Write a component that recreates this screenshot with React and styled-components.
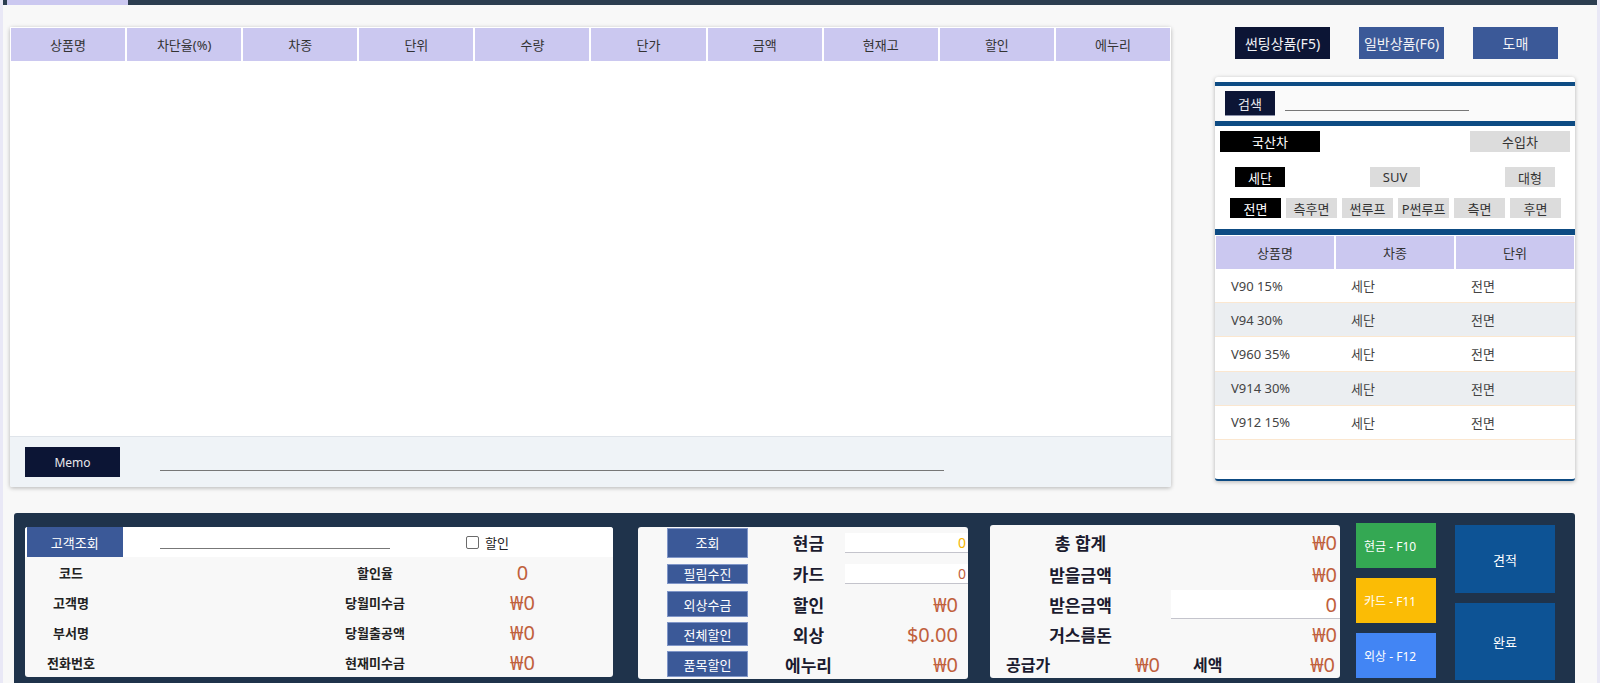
import styled, { createGlobalStyle } from "styled-components";

const GlobalStyle = createGlobalStyle`
  html, body {
    margin: 0;
    padding: 0;
    background: #e9e8f6;
  }
  body {
    font-family: "Noto Sans", "Noto Sans CJK KR", sans-serif;
    color: #333;
  }
  * { box-sizing: border-box; }
`;

const Page = styled.div`
  margin: 0 3px;
  min-height: 683px;
  background: #f8f8f8;
  overflow: hidden;
`;

const TopBar = styled.div`
  display: flex;
  height: 5px;
  padding-left: 4px;
  background: #2c3e50;
`;

const TopTab = styled.div`
  width: 121px;
  height: 5px;
  background: #cbc8f0;
`;

const Main = styled.div`
  display: flex;
  align-items: flex-start;
  gap: 44px;
  padding: 22px 0 0 7px;
`;

// ---------- left order table ----------
const OrderCard = styled.div`
  display: flex;
  flex-direction: column;
  width: 1161px;
  height: 460px;
  background: #fff;
  border-radius: 2px;
  box-shadow: 0 1px 4px rgba(0, 0, 0, 0.28);
`;

const HeadRow = styled.div`
  display: grid;
  grid-template-columns: repeat(${(p) => p.$cols}, 1fr);
  column-gap: 2px;
  padding: 1px 1px 0;
  background: #fff;
`;

const HeadCell = styled.div`
  display: flex;
  align-items: center;
  justify-content: center;
  height: 33px;
  background: #cbc8f0;
  font-size: 13px;
  color: #333;
`;

const OrderBody = styled.div`
  flex: 1;
  background: #fff;
`;

const MemoBar = styled.div`
  display: flex;
  align-items: flex-start;
  height: 51px;
  padding: 10px 0 0 15px;
  background: #eff3f7;
  border-top: 1px solid #dfe4ea;
  border-radius: 0 0 2px 2px;
`;

const DarkButton = styled.div`
  display: flex;
  align-items: center;
  justify-content: center;
  width: ${(p) => p.$w}px;
  height: ${(p) => p.$h}px;
  background: #0c1535;
  color: #e8e8ee;
  font-size: ${(p) => p.$fs || 13}px;
  border-bottom: ${(p) => (p.$edge ? "1px solid #8a90a8" : "none")};
`;

const Underline = styled.div`
  width: ${(p) => p.$w}px;
  height: 1px;
  margin-left: ${(p) => p.$ml}px;
  margin-top: ${(p) => p.$mt}px;
  background: #777;
`;

// ---------- right product panel ----------
const SideColumn = styled.div`
  width: 360px;
`;

const ModeRow = styled.div`
  display: flex;
  gap: 29px;
  padding-left: 20px;
`;

const ModeButton = styled.div`
  display: flex;
  align-items: center;
  justify-content: center;
  width: ${(p) => p.$w}px;
  height: 32px;
  background: ${(p) => (p.$active ? "#0c1535" : "#3b5998")};
  color: #f2f2f6;
  font-size: 14px;
`;

const ProductCard = styled.div`
  margin-top: 18px;
  padding-top: 5px;
  background: #fff;
  border-radius: 3px;
  border-bottom: 2px solid #0d4b83;
  box-shadow: 0 1px 4px rgba(0, 0, 0, 0.28);
  overflow: hidden;
`;

const Band = styled.div`
  height: ${(p) => p.$h}px;
  background: #0d4b83;
`;

const SearchRow = styled.div`
  display: flex;
  align-items: flex-start;
  height: 35px;
  padding: 5px 0 0 10px;
  background: #fafafa;
`;

const Filters = styled.div`
  display: flex;
  flex-direction: column;
  padding: 5px 0 11px;
`;

const ChipRow = styled.div`
  display: flex;
  justify-content: ${(p) => p.$justify || "space-between"};
  gap: ${(p) => p.$gap || 0}px;
  margin-top: ${(p) => p.$mt || 0}px;
  padding: 0 ${(p) => p.$pr}px 0 ${(p) => p.$pl}px;
`;

const Chip = styled.div`
  display: flex;
  align-items: center;
  justify-content: center;
  width: ${(p) => p.$w}px;
  height: ${(p) => p.$h}px;
  background: ${(p) => (p.$active ? "#000" : "#dcdcdc")};
  color: ${(p) => (p.$active ? "#fff" : "#333")};
  font-size: 13px;
`;

const ProductRow = styled.div`
  display: grid;
  grid-template-columns: repeat(3, 1fr);
  column-gap: 2px;
  height: 34.2px;
  padding: 0 1px;
  align-items: center;
  background: ${(p) => (p.$alt ? "#ebeef1" : "#fff")};
  border-bottom: 1px solid #fbe7d0;
  font-size: 13px;
  color: #444;
`;

const ProductCell = styled.div`
  padding-left: 15px;
`;

const ListFooter = styled.div`
  height: 30px;
  background: #f8f8f8;
  margin-bottom: 9px;
`;

// ---------- bottom checkout panel ----------
const Checkout = styled.div`
  display: flex;
  align-items: flex-start;
  width: 1561px;
  height: 175px;
  margin: 26px 0 0 11px;
  padding: 10px 0 0 10.5px;
  background: #1f334b;
  border-radius: 3px 3px 0 0;
`;

const Card = styled.div`
  width: ${(p) => p.$w}px;
  height: ${(p) => p.$h}px;
  margin-left: ${(p) => p.$ml || 0}px;
  margin-top: ${(p) => p.$mt || 0}px;
  background: #f8f8f8;
  border-radius: 3px;
  overflow: hidden;
`;

const CustomerTop = styled.div`
  display: flex;
  align-items: stretch;
  height: 30px;
  padding-left: 2.5px;
  background: #fff;
`;

const BlueButton = styled.div`
  display: flex;
  align-items: center;
  justify-content: center;
  width: ${(p) => p.$w}px;
  height: ${(p) => p.$h}px;
  margin-left: ${(p) => p.$ml || 0}px;
  background: #3b5998;
  border: ${(p) => (p.$outlined ? "1px solid #8096c8" : "none")};
  color: #fff;
  font-size: 13px;
`;

const CheckLabel = styled.label`
  display: flex;
  align-items: center;
  gap: 6px;
  margin-left: 76px;
  font-size: 13px;
  color: #222;
`;

const CheckBox = styled.span`
  width: 13px;
  height: 13px;
  border: 1.5px solid #6b6b6b;
  border-radius: 2px;
  background: #fff;
`;

const InfoGrid = styled.div`
  display: grid;
  grid-template-columns: 93px 200px 115px 1fr;
  grid-auto-rows: 30px;
  align-items: center;
`;

const InfoLabel = styled.div`
  grid-column: ${(p) => p.$col};
  text-align: center;
  font-size: 13px;
  font-weight: 600;
  color: #222;
`;

const Amount = styled.div`
  text-align: ${(p) => p.$align || "center"};
  padding-right: ${(p) => p.$pr || 0}px;
  font-size: ${(p) => p.$fs || 20}px;
  color: #c0603d;
`;

const PayGrid = styled.div`
  display: grid;
  grid-template-columns: 110px 97px 1fr;
  grid-template-rows: 31px 31px 30px 30px 30px;
  align-items: center;
`;

const PayLabel = styled.div`
  padding-left: 24px;
  text-align: center;
  font-size: 17px;
  font-weight: 700;
  color: #1b1b2f;
`;

const FieldBox = styled.div`
  height: ${(p) => p.$h}px;
  padding-right: ${(p) => p.$pr || 2}px;
  background: #fff;
  border-bottom: 1px solid #c4c4cc;
  text-align: right;
  line-height: ${(p) => p.$h}px;
  font-size: ${(p) => p.$fs}px;
  color: ${(p) => p.$color};
`;

const TotalGrid = styled.div`
  display: grid;
  grid-template-columns: 181px 1fr;
  grid-template-rows: 34px 30px 30px 30px 30px;
  align-items: center;
`;

const TotalLabel = styled.div`
  text-align: center;
  font-size: 17px;
  font-weight: 700;
  color: #1b1b2f;
`;

const SplitRow = styled.div`
  grid-column: 1 / span 2;
  display: grid;
  grid-template-columns: 172px 1fr;
  align-items: center;
`;

const SplitHalf = styled.div`
  display: flex;
  align-items: center;
  justify-content: space-between;
  padding: 0 ${(p) => p.$pr}px 0 ${(p) => p.$pl}px;
`;

const SmallLabel = styled.span`
  font-size: 16px;
  font-weight: 700;
  color: #1b1b2f;
`;

const KeyColumn = styled.div`
  display: flex;
  flex-direction: column;
  gap: 10px;
  width: ${(p) => p.$w}px;
  margin-left: ${(p) => p.$ml}px;
  margin-top: ${(p) => p.$mt || 0}px;
`;

const PayKey = styled.div`
  display: flex;
  align-items: center;
  height: 45px;
  padding-left: 8px;
  background: ${(p) => p.$bg};
  color: #fff;
  font-size: 12px;
`;

const BigKey = styled.div`
  display: flex;
  align-items: center;
  justify-content: center;
  height: ${(p) => p.$h}px;
  background: #0d5395;
  color: #fff;
  font-size: 13px;
`;

const orderColumns = ["상품명", "차단율(%)", "차종", "단위", "수량", "단가", "금액", "현재고", "할인", "에누리"];

const products = [
  { name: "V90 15%", type: "세단", unit: "전면" },
  { name: "V94 30%", type: "세단", unit: "전면" },
  { name: "V960 35%", type: "세단", unit: "전면" },
  { name: "V914 30%", type: "세단", unit: "전면" },
  { name: "V912 15%", type: "세단", unit: "전면" },
];

const parts = ["전면", "측후면", "썬루프", "P썬루프", "측면", "후면"];

export default function App() {
  return (
    <>
      <GlobalStyle />
      <Page>
        <TopBar>
          <TopTab />
        </TopBar>

        <Main>
          <OrderCard>
            <HeadRow $cols={10}>
              {orderColumns.map((c) => (
                <HeadCell key={c}>{c}</HeadCell>
              ))}
            </HeadRow>
            <OrderBody />
            <MemoBar>
              <DarkButton $w={95} $h={30} $fs={12}>Memo</DarkButton>
              <Underline $w={784} $ml={40} $mt={23} />
            </MemoBar>
          </OrderCard>

          <SideColumn>
            <ModeRow>
              <ModeButton $w={95} $active>썬팅상품(F5)</ModeButton>
              <ModeButton $w={85}>일반상품(F6)</ModeButton>
              <ModeButton $w={85}>도매</ModeButton>
            </ModeRow>

            <ProductCard>
              <Band $h={4} />
              <SearchRow>
                <DarkButton $w={50} $h={25} $fs={13} $edge>검색</DarkButton>
                <Underline $w={184} $ml={10} $mt={19} />
              </SearchRow>
              <Band $h={5} />
              <Filters>
                <ChipRow $pl={5} $pr={5}>
                  <Chip $w={100} $h={21} $active>국산차</Chip>
                  <Chip $w={100} $h={21}>수입차</Chip>
                </ChipRow>
                <ChipRow $pl={20} $pr={20} $mt={15}>
                  <Chip $w={50} $h={20} $active>세단</Chip>
                  <Chip $w={50} $h={20}>SUV</Chip>
                  <Chip $w={50} $h={20}>대형</Chip>
                </ChipRow>
                <ChipRow $pl={15} $pr={14} $mt={11} $justify="flex-start" $gap={5}>
                  {parts.map((p, i) => (
                    <Chip key={p} $w={51} $h={20} $active={i === 0}>{p}</Chip>
                  ))}
                </ChipRow>
              </Filters>
              <Band $h={6} />
              <HeadRow $cols={3}>
                <HeadCell>상품명</HeadCell>
                <HeadCell>차종</HeadCell>
                <HeadCell>단위</HeadCell>
              </HeadRow>
              {products.map((p, i) => (
                <ProductRow key={p.name} $alt={i % 2 === 1}>
                  <ProductCell>{p.name}</ProductCell>
                  <ProductCell>{p.type}</ProductCell>
                  <ProductCell>{p.unit}</ProductCell>
                </ProductRow>
              ))}
              <ListFooter />
            </ProductCard>
          </SideColumn>
        </Main>

        <Checkout>
          <Card $w={588} $h={150} $mt={4}>
            <CustomerTop>
              <BlueButton $w={95.5} $h={30}>고객조회</BlueButton>
              <Underline $w={230} $ml={37.5} $mt={21} />
              <CheckLabel>
                <CheckBox />
                할인
              </CheckLabel>
            </CustomerTop>
            <InfoGrid>
              <InfoLabel $col={1}>코드</InfoLabel>
              <InfoLabel $col={3}>할인율</InfoLabel>
              <Amount>0</Amount>
              <InfoLabel $col={1}>고객명</InfoLabel>
              <InfoLabel $col={3}>당월미수금</InfoLabel>
              <Amount>₩0</Amount>
              <InfoLabel $col={1}>부서명</InfoLabel>
              <InfoLabel $col={3}>당월출공액</InfoLabel>
              <Amount>₩0</Amount>
              <InfoLabel $col={1}>전화번호</InfoLabel>
              <InfoLabel $col={3}>현재미수금</InfoLabel>
              <Amount>₩0</Amount>
            </InfoGrid>
          </Card>

          <Card $w={330} $h={152} $ml={25.5} $mt={4}>
            <PayGrid>
              <BlueButton $w={81} $h={30} $ml={29} $outlined>조회</BlueButton>
              <PayLabel>현금</PayLabel>
              <FieldBox $h={20} $fs={14} $color="#f5b400">0</FieldBox>

              <BlueButton $w={81} $h={20} $ml={29} $outlined>필림수진</BlueButton>
              <PayLabel>카드</PayLabel>
              <FieldBox $h={20} $fs={14} $color="#c0603d">0</FieldBox>

              <BlueButton $w={81} $h={26} $ml={29} $outlined>외상수금</BlueButton>
              <PayLabel>할인</PayLabel>
              <Amount $align="right" $pr={10}>₩0</Amount>

              <BlueButton $w={81} $h={24} $ml={29} $outlined>전체할인</BlueButton>
              <PayLabel>외상</PayLabel>
              <Amount $align="right" $pr={10}>$0.00</Amount>

              <BlueButton $w={81} $h={26} $ml={29} $outlined>품목할인</BlueButton>
              <PayLabel>에누리</PayLabel>
              <Amount $align="right" $pr={10}>₩0</Amount>
            </PayGrid>
          </Card>

          <Card $w={350} $h={153} $ml={22} $mt={2}>
            <TotalGrid>
              <TotalLabel>총 합계</TotalLabel>
              <Amount $align="right" $pr={3}>₩0</Amount>
              <TotalLabel>받을금액</TotalLabel>
              <Amount $align="right" $pr={3}>₩0</Amount>
              <TotalLabel>받은금액</TotalLabel>
              <FieldBox $h={29} $fs={20} $pr={3} $color="#c0603d">0</FieldBox>
              <TotalLabel>거스름돈</TotalLabel>
              <Amount $align="right" $pr={3}>₩0</Amount>
              <SplitRow>
                <SplitHalf $pl={16} $pr={2}>
                  <SmallLabel>공급가</SmallLabel>
                  <Amount>₩0</Amount>
                </SplitHalf>
                <SplitHalf $pl={31} $pr={5}>
                  <SmallLabel>세액</SmallLabel>
                  <Amount>₩0</Amount>
                </SplitHalf>
              </SplitRow>
            </TotalGrid>
          </Card>

          <KeyColumn $w={80} $ml={16}>
            <PayKey $bg="#34a853">현금 - F10</PayKey>
            <PayKey $bg="#fbbc05">카드 - F11</PayKey>
            <PayKey $bg="#4285f4">외상 - F12</PayKey>
          </KeyColumn>

          <KeyColumn $w={100} $ml={19} $mt={2}>
            <BigKey $h={68}>견적</BigKey>
            <BigKey $h={77}>완료</BigKey>
          </KeyColumn>
        </Checkout>
      </Page>
    </>
  );
}
